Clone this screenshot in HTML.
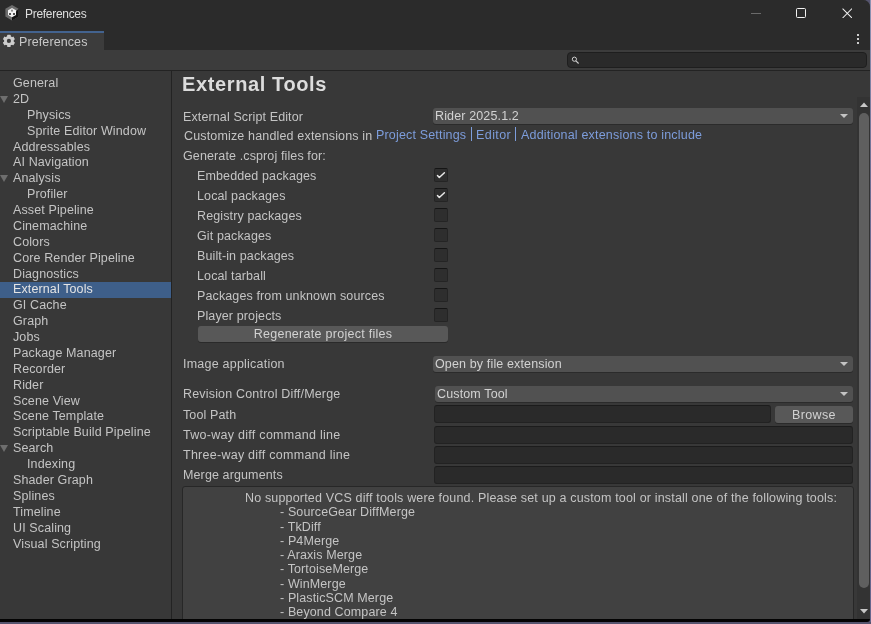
<!DOCTYPE html>
<html><head><meta charset="utf-8">
<style>
*{box-sizing:border-box;margin:0;padding:0}
html,body{width:871px;height:624px;overflow:hidden;background:#55546e}
body{position:relative;font-family:"Liberation Sans",sans-serif;font-size:12.5px;color:#c4c4c4}
.a{position:absolute}
.t{position:absolute;white-space:pre;line-height:15px;height:15px;will-change:transform;letter-spacing:0.12px}
#win{position:absolute;left:0;top:0;width:870px;height:619px;background:#383838;overflow:hidden;border-top-right-radius:7px}
#title{position:absolute;left:0;top:0;width:870px;height:31px;background:#2b2b2b}
#tabstrip{position:absolute;left:0;top:31px;width:870px;height:19px;background:#2b2b2b}
#tab{position:absolute;left:0;top:31px;width:104px;height:19px;background:#3c3c3c;border-top:2px solid #43638f}
#toolbar{position:absolute;left:0;top:50px;width:870px;height:20px;background:#3c3c3c}
#sep{position:absolute;left:0;top:70px;width:870px;height:1px;background:#232323}
#vsep{position:absolute;left:171px;top:71px;width:1px;height:560px;background:#232323}
.sel{position:absolute;left:0;width:171px;height:16px;background:#3e5f8a}
.tri{position:absolute;left:0.3px;width:0;height:0;border-left:4.6px solid transparent;border-right:4.6px solid transparent;border-top:7.8px solid #6e6e6e}
.dd{position:absolute;left:433px;width:420px;height:16px;background:#515151;border-radius:3px;box-shadow:0 1px 0 #2b2b2b;color:#d2d2d2}
.dd span{position:absolute;left:2px;letter-spacing:0.14px;top:0;line-height:16px;white-space:pre;will-change:transform}
.dd i{position:absolute;right:5px;top:6px;width:0;height:0;border-left:4px solid transparent;border-right:4px solid transparent;border-top:4.5px solid #c4c4c4}
.cb{position:absolute;left:434.3px;width:13.3px;height:13.5px;background:#2e2e2e;border:1px solid #242424;border-top-color:#151515;border-radius:2px}
.fld{position:absolute;left:434px;width:419px;height:17.7px;background:#2a2a2a;border:1px solid #222;border-top:1.5px solid #1c1c1c;border-radius:3px}
.btn{position:absolute;background:#585858;border-radius:3px;box-shadow:0 1px 0 #2a2a2a;color:#d2d2d2;text-align:center;line-height:16px;white-space:pre;will-change:transform}
.link{color:#7d9ddc}

</style></head><body>
<div id="win">
<div id="title"></div><div id="tabstrip"></div><div id="tab"></div><div id="toolbar"></div><div id="sep"></div><div id="vsep"></div>
<svg class="a" style="left:4px;top:4px" width="16" height="18" viewBox="0 0 16 18">
<polygon points="8,1 14.6,4.8 14.6,12.6 8,16.6 1.4,12.6 1.4,4.8" fill="#6d6d6d"/>
<polygon points="14.6,4.8 14.6,12.6 8,16.6 8,12" fill="#111"/>
<polygon points="8,4 12,6.3 12,11 8,13.3 4,11 4,6.3" fill="#f0f0f0"/>
<circle cx="8" cy="6.7" r="1.1" fill="#888"/><circle cx="6" cy="9.9" r="1" fill="#1a1a1a"/><circle cx="10" cy="9.9" r="1" fill="#1a1a1a"/>
</svg>
<div class="t" style="left:25px;top:6.60px;color:#dedede;font-size:12px;letter-spacing:-0.3px">Preferences</div>
<div class="a" style="left:751px;top:13px;width:10px;height:1px;background:#6a6a6a"></div>
<div class="a" style="left:796px;top:8px;width:10px;height:10px;border:1.3px solid #f2f2f2;border-radius:1.5px"></div>
<svg class="a" style="left:841.9px;top:7.5px" width="10.6" height="10.6" viewBox="0 0 11 11"><path d="M0.6 0.6L10.4 10.4M10.4 0.6L0.6 10.4" stroke="#f2f2f2" stroke-width="1.05"/></svg>
<svg class="a" style="left:2px;top:34px" width="14" height="14" viewBox="0 0 14 14">
<g fill="#cdcdcd"><circle cx="6.9" cy="6.9" r="4.9"/>
<rect x="5.2" y="0.8" width="3.4" height="12.2" rx="0.5"/>
<rect x="5.2" y="0.8" width="3.4" height="12.2" rx="0.5" transform="rotate(60 6.9 6.9)"/>
<rect x="5.2" y="0.8" width="3.4" height="12.2" rx="0.5" transform="rotate(120 6.9 6.9)"/></g>
<circle cx="6.9" cy="6.9" r="2.1" fill="#3c3c3c"/></svg>
<div class="t" style="left:19px;top:34.50px;color:#c8c8c8;letter-spacing:0.1px">Preferences</div>
<div class="a" style="left:857px;top:34.2px;width:2.2px;height:2.2px;background:#cccccc"></div>
<div class="a" style="left:857px;top:38.1px;width:2.2px;height:2.2px;background:#cccccc"></div>
<div class="a" style="left:857px;top:42px;width:2.2px;height:2.2px;background:#cccccc"></div>
<div class="a" style="left:567px;top:52px;width:300px;height:15.7px;background:#2a2a2a;border:1px solid #1e1e1e;border-radius:4px"></div>
<svg class="a" style="left:570px;top:55.4px" width="10" height="10" viewBox="0 0 10 10"><circle cx="4.4" cy="4.2" r="2.1" fill="none" stroke="#d0d0d0" stroke-width="1"/><path d="M5.9 5.8L8.6 8.5" stroke="#d0d0d0" stroke-width="1.1"/></svg>
<div class="t" style="left:13px;top:76.00px;">General</div>
<div class="tri" style="top:95.88px"></div>
<div class="t" style="left:13px;top:91.88px;">2D</div>
<div class="t" style="left:27px;top:107.76px;">Physics</div>
<div class="t" style="left:27px;top:123.64px;">Sprite Editor Window</div>
<div class="t" style="left:13px;top:139.52px;">Addressables</div>
<div class="t" style="left:13px;top:155.40px;">AI Navigation</div>
<div class="tri" style="top:175.28px"></div>
<div class="t" style="left:13px;top:171.28px;">Analysis</div>
<div class="t" style="left:27px;top:187.16px;">Profiler</div>
<div class="t" style="left:13px;top:203.04px;">Asset Pipeline</div>
<div class="t" style="left:13px;top:218.92px;">Cinemachine</div>
<div class="t" style="left:13px;top:234.80px;">Colors</div>
<div class="t" style="left:13px;top:250.68px;">Core Render Pipeline</div>
<div class="t" style="left:13px;top:266.56px;">Diagnostics</div>
<div class="sel" style="top:282px"></div>
<div class="t" style="left:13px;top:282.44px;color:#e4e4e4">External Tools</div>
<div class="t" style="left:13px;top:298.32px;">GI Cache</div>
<div class="t" style="left:13px;top:314.20px;">Graph</div>
<div class="t" style="left:13px;top:330.08px;">Jobs</div>
<div class="t" style="left:13px;top:345.96px;">Package Manager</div>
<div class="t" style="left:13px;top:361.84px;">Recorder</div>
<div class="t" style="left:13px;top:377.72px;">Rider</div>
<div class="t" style="left:13px;top:393.60px;">Scene View</div>
<div class="t" style="left:13px;top:409.48px;">Scene Template</div>
<div class="t" style="left:13px;top:425.36px;">Scriptable Build Pipeline</div>
<div class="tri" style="top:445.24px"></div>
<div class="t" style="left:13px;top:441.24px;">Search</div>
<div class="t" style="left:27px;top:457.12px;">Indexing</div>
<div class="t" style="left:13px;top:473.00px;">Shader Graph</div>
<div class="t" style="left:13px;top:488.88px;">Splines</div>
<div class="t" style="left:13px;top:504.76px;">Timeline</div>
<div class="t" style="left:13px;top:520.64px;">UI Scaling</div>
<div class="t" style="left:13px;top:536.52px;">Visual Scripting</div>
<div class="t" style="left:182px;top:80.00px;font-size:20px;font-weight:bold;letter-spacing:0.62px;color:#dcdcdc;line-height:24px;height:24px;top:72.40px">External Tools</div>
<div class="t" style="left:182.5px;top:109.80px;">External Script Editor</div>
<div class="dd" style="top:108px"><span>Rider 2025.1.2</span><i></i></div>
<div class="t" style="left:183.5px;top:128.50px;letter-spacing:0.16px">Customize handled extensions in</div>
<div class="t" style="left:375.8px;top:128.30px;letter-spacing:0.17px"><span class="link">Project Settings</span></div>
<div class="a" style="left:471px;top:127px;width:1px;height:14px;background:#7d9ddc"></div>
<div class="t" style="left:476.4px;top:128.30px;letter-spacing:0.42px"><span class="link">Editor</span></div>
<div class="a" style="left:515px;top:127px;width:1px;height:14px;background:#7d9ddc"></div>
<div class="t" style="left:521px;top:128.30px;letter-spacing:0.19px"><span class="link">Additional extensions to include</span></div>
<div class="t" style="left:183.3px;top:148.60px;">Generate .csproj files for:</div>
<div class="t" style="left:197.2px;top:169.00px;">Embedded packages</div>
<div class="cb" style="top:168px"></div>
<svg class="a" style="left:434px;top:168px" width="14" height="14" viewBox="0 0 14 14"><path d="M3.5 7.6L5.3 9.5L10.4 4.8" fill="none" stroke="#e8e8e8" stroke-width="1.5" stroke-linecap="round" stroke-linejoin="round"/></svg>
<div class="t" style="left:197.2px;top:189.00px;">Local packages</div>
<div class="cb" style="top:188px"></div>
<svg class="a" style="left:434px;top:188px" width="14" height="14" viewBox="0 0 14 14"><path d="M3.5 7.6L5.3 9.5L10.4 4.8" fill="none" stroke="#e8e8e8" stroke-width="1.5" stroke-linecap="round" stroke-linejoin="round"/></svg>
<div class="t" style="left:197.2px;top:209.00px;">Registry packages</div>
<div class="cb" style="top:208px"></div>
<div class="t" style="left:197.2px;top:229.00px;">Git packages</div>
<div class="cb" style="top:228px"></div>
<div class="t" style="left:197.2px;top:249.00px;">Built-in packages</div>
<div class="cb" style="top:248px"></div>
<div class="t" style="left:197.2px;top:269.00px;">Local tarball</div>
<div class="cb" style="top:268px"></div>
<div class="t" style="left:197.2px;top:289.00px;">Packages from unknown sources</div>
<div class="cb" style="top:288px"></div>
<div class="t" style="left:197.2px;top:309.00px;">Player projects</div>
<div class="cb" style="top:308px"></div>
<div class="btn" style="left:198px;top:326px;width:250px;height:16px;letter-spacing:0.28px;line-height:17px">Regenerate project files</div>
<div class="t" style="left:183.3px;top:357.00px;letter-spacing:0.22px">Image application</div>
<div class="dd" style="top:356px"><span>Open by file extension</span><i></i></div>
<div class="t" style="left:183.3px;top:387.00px;letter-spacing:0.18px">Revision Control Diff/Merge</div>
<div class="dd" style="top:386px;left:435px;width:418px"><span>Custom Tool</span><i></i></div>
<div class="t" style="left:183.3px;top:407.50px;">Tool Path</div>
<div class="fld" style="top:405px;width:337px"></div>
<div class="btn" style="left:775px;top:406px;width:78px;height:16.5px;line-height:18px;letter-spacing:0.35px">Browse</div>
<div class="t" style="left:183.3px;top:428.00px;letter-spacing:0.28px">Two-way diff command line</div>
<div class="fld" style="top:426px"></div>
<div class="t" style="left:183.3px;top:448.00px;letter-spacing:0.26px">Three-way diff command line</div>
<div class="fld" style="top:446px"></div>
<div class="t" style="left:183.3px;top:468.00px;letter-spacing:0.12px">Merge arguments</div>
<div class="fld" style="top:466px"></div>
<div class="a" style="left:182px;top:486px;width:671.5px;height:140px;background:#414141;border:1px solid #272727;border-radius:3px"></div>
<div class="t" style="left:245.2px;top:491.10px;letter-spacing:0.167px">No supported VCS diff tools were found. Please set up a custom tool or install one of the following tools:</div>
<div class="t" style="left:280px;top:505.30px;">- SourceGear DiffMerge</div>
<div class="t" style="left:280px;top:519.57px;">- TkDiff</div>
<div class="t" style="left:280px;top:533.84px;">- P4Merge</div>
<div class="t" style="left:280px;top:548.11px;">- Araxis Merge</div>
<div class="t" style="left:280px;top:562.38px;">- TortoiseMerge</div>
<div class="t" style="left:280px;top:576.65px;">- WinMerge</div>
<div class="t" style="left:280px;top:590.92px;">- PlasticSCM Merge</div>
<div class="t" style="left:280px;top:605.19px;">- Beyond Compare 4</div>
<div class="a" style="left:857px;top:97px;width:13px;height:522px;background:#333333"></div>
<div class="a" style="left:859px;top:113px;width:10px;height:475px;background:#5f5f5f;border-radius:5px"></div>
<svg class="a" style="left:859px;top:101px" width="10" height="7" viewBox="0 0 10 7"><polygon points="1,6 9,6 5,1.5" fill="#c8c8c8"/></svg>
<svg class="a" style="left:859px;top:608px" width="10" height="7" viewBox="0 0 10 7"><polygon points="1,1 9,1 5,5.5" fill="#c8c8c8"/></svg>
</div>
<div class="a" style="left:0;top:619px;width:870px;height:3px;background:#030303;border-bottom-right-radius:4px"></div>
<div class="a" style="left:870px;top:0;width:1px;height:622px;background:linear-gradient(#8d93b3,#6d6d92 30%,#66668c)"></div>
</body></html>
